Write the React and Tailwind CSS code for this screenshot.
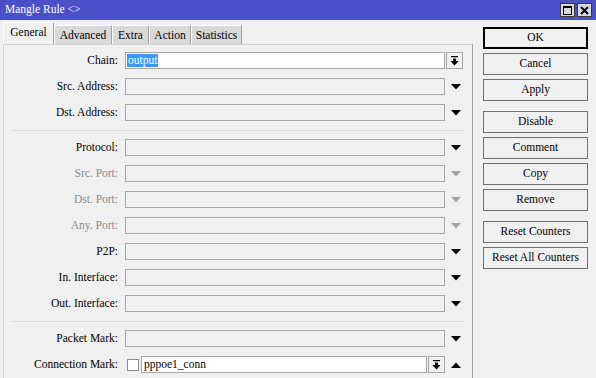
import React from "react";

const Down = ({ dim }) => (
  <svg width="10" height="6" viewBox="0 0 10 6" className="block">
    <polygon points="0,0 10,0 5,5.5" fill={dim ? "#a3a3a3" : "#000"} />
  </svg>
);
const Up = () => (
  <svg width="10" height="6" viewBox="0 0 10 6" className="block">
    <polygon points="0,6 10,6 5,0.5" fill="#000" />
  </svg>
);
const BarDown = () => (
  <svg width="9" height="10" viewBox="0 0 9 10" className="block">
    <rect x="1" y="0" width="7" height="1.2" fill="#000" />
    <rect x="3" y="2.5" width="3" height="2.5" fill="#000" />
    <polygon points="0.5,5 8.5,5 4.5,9.5" fill="#000" />
  </svg>
);

const Row = ({ label, dim, arrow = "down", children }) => (
  <div className="flex h-[17px] items-center">
    <div className={`w-[114px] text-right leading-none whitespace-nowrap ${dim ? "text-[#8a8a8a]" : "text-black"}`}>
      {label}
    </div>
    <div className="ml-[7px] flex h-full items-center">
      {children || <div className="h-[17px] w-[320px] border border-[#a6a6a6] bg-[#f0f0f0]" />}
    </div>
    {arrow === "down" && (
      <div className="ml-[6px]">
        <Down dim={dim} />
      </div>
    )}
    {arrow === "up" && (
      <div className="ml-[6px]">
        <Up />
      </div>
    )}
  </div>
);

const Sep = () => <div className="mx-[7px] h-px -mb-px bg-[#dcdcdc]" />;

const Btn = ({ children, def }) => (
  <div
    className={`flex h-[22px] w-[105px] items-center justify-center bg-[#f0f0f0] leading-none text-black ${
      def ? "border-2 border-black" : "border border-[#6f6f6f]"
    }`}
  >
    {children}
  </div>
);

export default function App() {
  return (
    <div className="flex h-[378px] w-[596px] flex-col overflow-hidden bg-[#f0f0f0] [font-family:'Liberation_Serif',serif] text-[11.5px]">
      {/* Title bar */}
      <div className="flex h-[20px] shrink-0 items-center justify-between bg-[#4b50c8] pl-[5px] pr-[4px]">
        <span className="text-[11.5px] leading-none text-white">Mangle Rule &lt;&gt;</span>
        <div className="flex gap-[2px]">
          <div className="flex h-[14px] w-[15px] items-center justify-center border border-[#3a3a3a] bg-[#d8d8d8]">
            <div className="h-[9px] w-[9px] border border-black border-t-2" />
          </div>
          <div className="flex h-[14px] w-[15px] items-center justify-center border border-[#3a3a3a] bg-[#d8d8d8]">
            <svg width="9" height="9" viewBox="0 0 9 9">
              <path d="M1 1 L8 8 M8 1 L1 8" stroke="#000" strokeWidth="2" />
            </svg>
          </div>
        </div>
      </div>

      <div className="flex flex-1 pt-[2px]">
        {/* Left */}
        <div className="flex w-[476px] flex-col pl-[3px]">
          <div className="flex h-[22px] items-end">
            <div className="flex h-[22px] w-[51px] items-center justify-center border-l border-t border-r border-l-white border-t-white border-r-[#a0a0a0] bg-[#f0f0f0] pb-[1px]">
              General
            </div>
            {[
              ["Advanced", "w-[58px]"],
              ["Extra", "w-[37px]"],
              ["Action", "w-[42px]"],
              ["Statistics", "w-[51px]"],
            ].map(([t, w]) => (
              <div
                key={t}
                className={`flex h-[19px] ${w} items-center justify-center border-l border-t border-r border-l-white border-t-white border-r-[#a0a0a0] bg-[#d9d9d9] pt-[1px]`}
              >
                {t}
              </div>
            ))}
          </div>
          <div className="flex w-[470px] flex-1 flex-col gap-[9px] border-l border-r border-t border-l-[#d4d4d4] border-r-[#a0a0a0] border-t-[#d4d4d4] pt-[7px]">
            <Row label="Chain:" arrow="none">
              <div className="flex h-[17px] w-[320px] items-center border border-[#a6a6a6] bg-white pl-[1px]">
                <span className="bg-[#3399ff] px-[1px] leading-[13px] text-white">output</span>
              </div>
              <div className="ml-[1px] flex h-[17px] w-[17px] items-center justify-center border border-[#a6a6a6] bg-[#f0f0f0]">
                <BarDown />
              </div>
            </Row>
            <Row label="Src. Address:" />
            <Row label="Dst. Address:" />
            <Sep />
            <Row label="Protocol:" />
            <Row label="Src. Port:" dim />
            <Row label="Dst. Port:" dim />
            <Row label="Any. Port:" dim />
            <Row label="P2P:" />
            <Row label="In. Interface:" />
            <Row label="Out. Interface:" />
            <Sep />
            <Row label="Packet Mark:" />
            <Row label="Connection Mark:" arrow="up">
              <div className="ml-[2px] h-[12px] w-[12px] border border-[#8a8a8a] bg-white" />
              <div className="ml-[2px] flex h-[17px] w-[286px] items-center border border-[#a6a6a6] bg-white pl-[2px] leading-none">
                pppoe1_conn
              </div>
              <div className="ml-[1px] flex h-[17px] w-[17px] items-center justify-center border border-[#a6a6a6] bg-[#f0f0f0]">
                <BarDown />
              </div>
            </Row>
          </div>
        </div>

        {/* Right buttons */}
        <div className="flex flex-col pl-[7px] pt-[5px]">
          <div className="flex flex-col gap-[4px]">
            <Btn def>OK</Btn>
            <Btn>Cancel</Btn>
            <Btn>Apply</Btn>
          </div>
          <div className="mt-[10px] flex flex-col gap-[4px]">
            <Btn>Disable</Btn>
            <Btn>Comment</Btn>
            <Btn>Copy</Btn>
            <Btn>Remove</Btn>
          </div>
          <div className="mt-[10px] flex flex-col gap-[4px]">
            <Btn>Reset Counters</Btn>
            <Btn>Reset All Counters</Btn>
          </div>
        </div>
      </div>
    </div>
  );
}
